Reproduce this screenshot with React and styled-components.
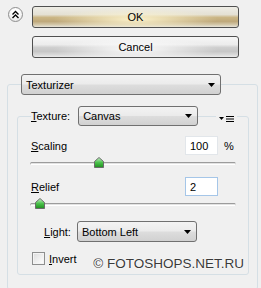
import styled, { createGlobalStyle } from "styled-components";

const GlobalStyle = createGlobalStyle`
  html, body {
    margin: 0;
    padding: 0;
    background: #f0f0f0;
  }
  body {
    width: 261px;
    height: 288px;
    overflow: hidden;
    font-family: "Liberation Sans", Arial, sans-serif;
    font-size: 11px;
    color: #000;
  }
`;

const Panel = styled.div`
  padding-top: 6px;
`;

const Header = styled.div`
  display: grid;
  grid-template-columns: 32px 207px;
  row-gap: 8px;
`;

const CollapseButton = styled.div`
  box-sizing: border-box;
  width: 15px;
  height: 15px;
  margin: 1px 0 0 8px;
  border-radius: 50%;
  border: 1px solid #8f8f8f;
  background: radial-gradient(circle at 50% 35%, #ffffff 30%, #dedede 100%);
  display: flex;
  align-items: center;
  justify-content: center;
`;

const Button = styled.div`
  box-sizing: border-box;
  height: 22px;
  border: 1px solid #505050;
  border-radius: 3px;
  display: flex;
  align-items: center;
  justify-content: center;
  font-size: 11px;
  background: ${(p) =>
    p.$primary
      ? `radial-gradient(ellipse 40% 55% at 50% 62%, rgba(255,246,208,0.95), rgba(255,246,208,0) 100%),
         linear-gradient(to bottom, #eeede6 0%, #e4e0d3 38%, #cbb685 52%, #bfa87a 72%, #d3c7a9 88%, #e8e4da 100%)`
      : `radial-gradient(ellipse 40% 55% at 50% 62%, rgba(255,255,255,0.95), rgba(255,255,255,0) 100%),
         linear-gradient(to bottom, #f6f6f6 0%, #ececec 38%, #cfcfcf 52%, #c6c6c6 72%, #d8d8d8 88%, #ebebeb 100%)`};
  grid-column: 2;
`;

const OuterGroup = styled.fieldset`
  margin: 16px 3px 0 7px;
  border: 1px solid #d5dfe5;
  border-radius: 3px;
  padding: 0 8px 14px 9px;
  min-width: 0;
`;

const OuterLegend = styled.legend`
  padding: 0;
  margin-left: 4px;
`;

const Select = styled.div`
  box-sizing: border-box;
  width: ${(p) => p.$width}px;
  height: ${(p) => p.$height || 20}px;
  border: 1px solid #707070;
  border-radius: 3px;
  padding: 0 5px 0 4px;
  display: flex;
  align-items: center;
  justify-content: space-between;
  background: linear-gradient(to bottom, #f3f3f3 0%, #ebebeb 48%, #dddddd 52%, #d1d1d1 100%);
`;

const InnerGroup = styled.fieldset`
  position: relative;
  margin: 11px 0 0 0;
  border: 1px solid #d5dfe5;
  border-radius: 3px;
  padding: 10px 12px 9px 13px;
  min-width: 0;
`;

const InnerLegend = styled.legend`
  padding: 0;
  display: flex;
  align-items: center;
  gap: 8px;
`;

const MenuIcon = styled.div`
  position: absolute;
  top: -11px;
  right: 11px;
  padding: 0 3px;
  background: #f0f0f0;
  display: flex;
`;

const ParamRow = styled.div`
  display: flex;
  align-items: center;
  height: 19px;
`;

const Label = styled.span`
  flex: ${(p) => (p.$grow ? 1 : "none")};
  padding-left: ${(p) => p.$indent || 0}px;
  padding-top: 1px;
`;

const NumberBox = styled.div`
  box-sizing: border-box;
  width: 33px;
  height: 19px;
  background: #fff;
  border: 1px solid ${(p) => (p.$hover ? "#a5c6e8" : "#e2e6ea")};
  padding: 0 4px;
  display: flex;
  align-items: center;
`;

const Unit = styled.span`
  width: 18px;
  box-sizing: border-box;
  padding-left: 6px;
`;

const SliderBox = styled.div`
  position: relative;
  height: 22px;
  margin-left: -1px;
`;

const Track = styled.div`
  position: absolute;
  left: 0;
  right: 0;
  top: 7px;
  height: 3px;
  box-sizing: border-box;
  border-radius: 2px;
  border-top: 1px solid #9c9c9c;
  border-left: 1px solid #b4b4b4;
  border-right: 1px solid #d8d8d8;
  border-bottom: 1px solid #ffffff;
  background: #e2e2e2;
`;

const Thumb = styled.div`
  position: absolute;
  top: 2px;
  margin-left: -5px;
  display: flex;
`;

const LightRow = styled.div`
  display: flex;
  align-items: center;
  gap: 6px;
  margin-top: 3px;
`;

const CheckRow = styled.div`
  display: flex;
  align-items: center;
  gap: 4px;
  margin-top: 10px;
  margin-left: 1px;
`;

const CheckBox = styled.div`
  box-sizing: border-box;
  width: 13px;
  height: 13px;
  border: 1px solid #8e8f8f;
  background: linear-gradient(135deg, #dcdcdc 0%, #f2f2f2 60%, #ffffff 100%);
  box-shadow: inset 0 0 0 1px #f4f4f4;
`;

const Watermark = styled.div`
  position: absolute;
  right: 4px;
  bottom: 3px;
  font-family: "Liberation Sans", Arial, sans-serif;
  font-size: 13.5px;
  color: #3a3a3a;
  white-space: nowrap;
  text-shadow: 0 0 2px #fff, 0 0 1px #fff;
`;

const Arrow = () => (
  <svg width="7" height="4" viewBox="0 0 7 4">
    <polygon points="0,0 7,0 3.5,4" fill="#000" />
  </svg>
);

const Slider = ({ pos }) => (
  <SliderBox>
    <Track />
    <Thumb style={{ left: `${pos}%` }}>
      <svg width="10" height="11" viewBox="0 0 10 11">
        <defs>
          <linearGradient id="thumbFill" x1="0" y1="0" x2="0" y2="1">
            <stop offset="0" stopColor="#c9f0c9" />
            <stop offset="0.5" stopColor="#4cc24c" />
            <stop offset="1" stopColor="#1f8f1f" />
          </linearGradient>
        </defs>
        <path
          d="M5 0.5 L9.5 4.5 L9.5 10.5 L0.5 10.5 L0.5 4.5 Z"
          fill="url(#thumbFill)"
          stroke="#6b6b6b"
          strokeWidth="1"
        />
      </svg>
    </Thumb>
  </SliderBox>
);

const App = () => {
  return (
    <Panel>
      <GlobalStyle />
      <Header>
        <CollapseButton>
          <svg width="9" height="9" viewBox="0 0 9 9">
            <path
              d="M1.5 4.5 L4.5 1.5 L7.5 4.5 M1.5 8 L4.5 5 L7.5 8"
              fill="none"
              stroke="#000"
              strokeWidth="1.4"
            />
          </svg>
        </CollapseButton>
        <Button $primary>OK</Button>
        <Button>Cancel</Button>
      </Header>

      <OuterGroup>
        <OuterLegend>
          <Select $width={200} $height={21}>
            <span>Texturizer</span>
            <Arrow />
          </Select>
        </OuterLegend>

        <InnerGroup>
          <InnerLegend>
            <span>
              <u>T</u>exture:
            </span>
            <Select $width={120}>
              <span>Canvas</span>
              <Arrow />
            </Select>
          </InnerLegend>
          <MenuIcon>
            <svg width="15" height="8" viewBox="0 0 15 8">
              <polygon points="0,2 5,2 2.5,5" fill="#000" />
              <rect x="7" y="1" width="8" height="1" fill="#000" />
              <rect x="7" y="3.5" width="8" height="1" fill="#000" />
              <rect x="7" y="6" width="8" height="1" fill="#000" />
            </svg>
          </MenuIcon>

          <ParamRow>
            <Label $grow>
              <u>S</u>caling
            </Label>
            <NumberBox>100</NumberBox>
            <Unit>%</Unit>
          </ParamRow>
          <Slider pos={33.7} />

          <ParamRow>
            <Label $grow>
              <u>R</u>elief
            </Label>
            <NumberBox $hover>2</NumberBox>
            <Unit />
          </ParamRow>
          <Slider pos={5} />

          <LightRow>
            <Label $indent={13}>
              <u>L</u>ight:
            </Label>
            <Select $width={120} $height={21}>
              <span>Bottom Left</span>
              <Arrow />
            </Select>
          </LightRow>

          <CheckRow>
            <CheckBox />
            <span>
              <u>I</u>nvert
            </span>
          </CheckRow>

          <Watermark>© FOTOSHOPS.NET.RU</Watermark>
        </InnerGroup>
      </OuterGroup>
    </Panel>
  );
};

export default App;
